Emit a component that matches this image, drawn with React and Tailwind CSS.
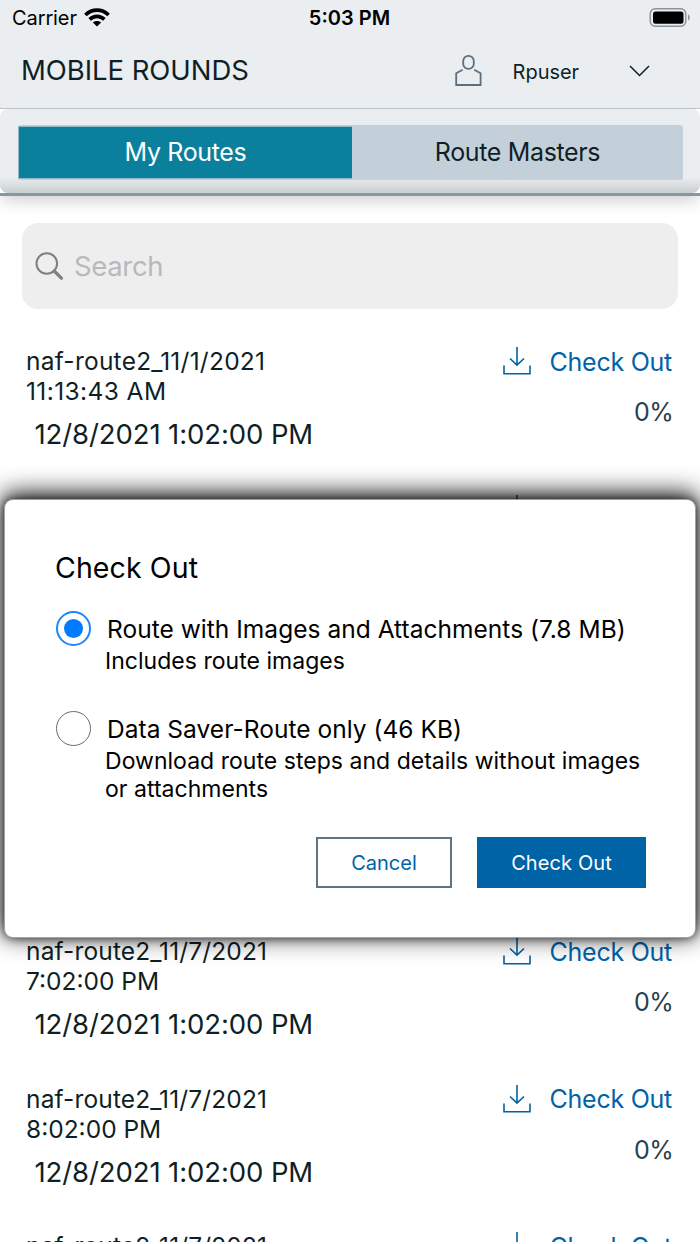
const date = "12/8/2021 1:02:00 PM";

// rows 2-4 sit behind the dialog, only the top of the second one peeks out
const routes = [
  { id: 1, name: "naf-route2_11/1/2021", time: "11:13:43 AM", date, progress: "0%", wide: true },
  { id: 2 },
  { id: 3, hidden: true },
  { id: 4, hidden: true },
  { id: 5, name: "naf-route2_11/7/2021", time: "7:02:00 PM", date, progress: "0%" },
  { id: 6, name: "naf-route2_11/7/2021", time: "8:02:00 PM", date, progress: "0%" },
  { id: 7, name: "naf-route2_11/7/2021" },
];

function StatusBar() {
  return (
    <div className="grid h-9 grid-cols-3 items-center pl-3 pr-[9px] text-[20px] text-black">
      <div className="flex items-center gap-[7px]">
        <span className="tracking-[-0.1px]">Carrier</span>
        <svg className="mb-0.5 h-[19px] w-[26px]" viewBox="0 0 26 19">
          <g fill="none" stroke="#000" strokeWidth="3.6">
            <path d="M1.4 7 C8 .5 18 .5 24.6 7" />
            <path d="M5.6 11.4 C10 7.3 16 7.3 20.4 11.4" />
          </g>
          <path d="M13 18.4 L8.9 14.4 C11.2 12.4 14.8 12.4 17.1 14.4 Z" />
        </svg>
      </div>
      <span className="pr-1 text-center font-semibold">5:03 PM</span>
      <svg className="h-5 w-[42px] justify-self-end" viewBox="0 0 42 20">
        <rect x="1.2" y="0.7" width="35.6" height="17.6" rx="5" fill="none" stroke="#8f9193" strokeWidth="1.4" />
        <rect x="4" y="3.5" width="30.5" height="12.2" rx="2.5" />
        <path d="M39 6.5 C41.4 7.9 41.4 11.1 39 12.5 Z" fill="#8f9193" />
      </svg>
    </div>
  );
}

function Header() {
  return (
    <header className="flex h-[73px] items-center border-b border-[#bcc3c8] pb-[3px] pl-[21px] pr-[50px] text-[#0f1f26]">
      <h1 className="flex-1 text-[27.5px] tracking-[-0.05px]">MOBILE ROUNDS</h1>
      <svg className="mr-[31px] h-8 w-[27px]" viewBox="0 0 27 32" fill="none" stroke="#5a7080" strokeWidth="1.8">
        <rect x="8.2" y="0.9" width="10.6" height="13" rx="5.2" />
        <path d="M7.6 14.8 L1.2 18.3 V30 H25.6 V18.3 L19.2 14.8" />
      </svg>
      <span className="mt-0.5 text-[20px] tracking-[-0.05px]">Rpuser</span>
      <svg className="ml-[50px] h-3 w-[21px]" viewBox="0 0 21 12" fill="none" stroke="#0f1f26" strokeWidth="1.5">
        <path d="M1 1 L10.5 10.5 L20 1" />
      </svg>
    </header>
  );
}

function Tabs() {
  return (
    <div className="relative z-10 border-b-[3px] border-[#8499a6] shadow-[0_6px_16px_-2px_rgba(0,0,0,0.2)]">
      <div className="bg-white">
        <div className="h-[84px] rounded-lg bg-[#eaeef1] bg-linear-to-t from-[#c9ced1] to-[#eaeef1] to-[16px] px-[18px] pt-4">
          <div className="flex h-[55px] w-[665px] rounded-[3px] bg-[#c4d0d9] py-px text-[25px] tracking-[-0.35px]">
            <button className="w-[334px] border border-r-0 border-[#8fb9c6] bg-[#0a809c] text-white">My Routes</button>
            <button className="flex-1 text-[#0f1f26]">Route Masters</button>
          </div>
        </div>
      </div>
    </div>
  );
}

function SearchBox() {
  return (
    <div className="mx-[22px] mt-[27px] flex h-[86px] items-center rounded-2xl bg-[#eeeeee] pl-[13px]">
      <svg className="h-7 w-7" viewBox="0 0 28 28" fill="none" stroke="#808083">
        <circle cx="11.8" cy="11.5" r="10.3" strokeWidth="2" />
        <path d="M19.2 19 L26.4 26.2" strokeWidth="3.2" strokeLinecap="round" />
      </svg>
      <span className="ml-[11px] mt-0.5 text-[27.5px] tracking-[-0.35px] text-[#b9b9bb]">Search</span>
    </div>
  );
}

function RouteRow({ route }) {
  if (route.hidden) return <li className="h-[147.5px]" />;

  return (
    <li className="flex h-[147.5px] justify-between pl-[26px] pr-7 pt-[9px] text-[#0f1f26]">
      <div>
        <div className={`text-[24.5px] leading-[30px] ${route.wide ? "tracking-[0.25px]" : "tracking-[0.15px]"}`}>
          {route.name}
        </div>
        <div className={`text-[24.5px] leading-[30px] ${route.wide ? "tracking-[0.4px]" : "tracking-normal"}`}>
          {route.time}
        </div>
        <div className="ml-[8.5px] mt-2.5 text-[27.5px] leading-9 tracking-[-0.1px]">{route.date}</div>
      </div>
      <div className="text-right text-[25px] leading-[30px]">
        <button className="flex h-[30px] items-center tracking-[-0.25px] text-[#0063a6]">
          <svg className="mr-[19px] h-7 w-7" viewBox="0 0 28 28" fill="none" stroke="#0063a6" strokeWidth="1.6">
            <path d="M14 0 V18 M7 11.5 L14 18.2 L21 11.5 M1 18.5 V26.8 H27 V18.5" />
          </svg>
          <span className="mt-px">Check Out</span>
        </button>
        <div className="-mr-px mt-[21px] tracking-[-0.7px] text-[#2b3f4a]">{route.progress}</div>
      </div>
    </li>
  );
}

function Option({ checked, label, note }) {
  return (
    <div className="flex">
      <span
        className={`ml-px flex size-[35px] shrink-0 items-center justify-center rounded-full ${
          checked ? "border-2 border-[#1a87ff]" : "border border-[#6b6b6b]"
        }`}
      >
        {checked && <span className="size-[19px] rounded-full bg-[#007aff]" />}
      </span>
      <div className="ml-3.5">
        <div className="ml-0.5 text-[24.5px] leading-9 tracking-[0.03px]">{label}</div>
        <div className="text-[23px] leading-7 tracking-[0.03px]">{note}</div>
      </div>
    </div>
  );
}

function CheckOutDialog() {
  return (
    <div
      role="dialog"
      className="absolute left-[5px] top-[500px] z-20 h-[437px] w-[690px] rounded-lg bg-white pl-[50px] pr-[49px] pt-[50px] text-black shadow-[0_0_0_1px_rgba(170,170,170,0.9),0_0_8px_1px_rgba(0,0,0,0.55),0_-4px_24px_3px_rgba(0,0,0,0.9)]"
    >
      <h2 className="text-[28.5px] leading-9 tracking-[0.1px]">Check Out</h2>
      <div className="mt-[25px] flex flex-col gap-9">
        <Option checked label="Route with Images and Attachments (7.8 MB)" note="Includes route images" />
        <Option label="Data Saver-Route only (46 KB)" note="Download route steps and details without images or attachments" />
      </div>
      <div className="mt-[34px] flex justify-end gap-[25px] text-[20px]">
        <button className="h-[51px] w-[136px] border-2 border-[#5f7482] text-[#0063a6]">Cancel</button>
        <button className="h-[51px] w-[169px] bg-[#0063a6] tracking-[0.1px] text-white">Check Out</button>
      </div>
    </div>
  );
}

export default function App() {
  return (
    <div className="h-[1244px] bg-white font-['Inter',sans-serif]">
      <div className="relative h-[1242px] w-[700px] overflow-hidden">
        <div className="relative z-20 bg-[#eaeef1]">
          <StatusBar />
          <Header />
        </div>
        <Tabs />
        <SearchBox />
        <ul className="mt-7">
          {routes.map((r) => (
            <RouteRow key={r.id} route={r} />
          ))}
        </ul>
        <CheckOutDialog />
      </div>
    </div>
  );
}
